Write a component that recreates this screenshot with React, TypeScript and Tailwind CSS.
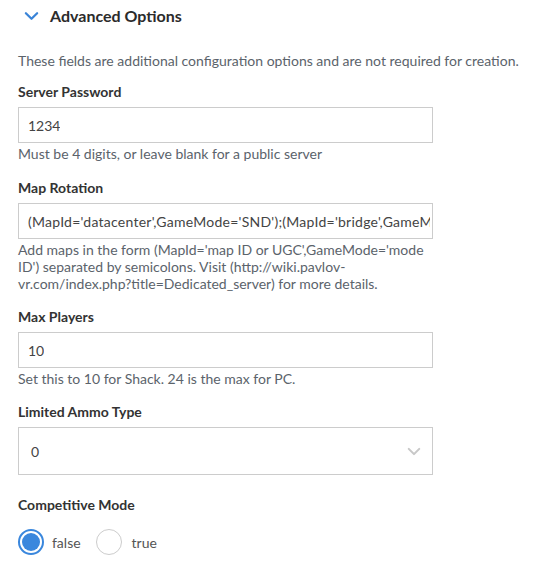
import React from "react";

function Chevron({ className, color }: { className?: string; color: string }) {
  return (
    <svg className={className} viewBox="0 0 16 10" fill="none">
      <path d="M2 2l6 6 6-6" stroke={color} strokeWidth="2.4" strokeLinecap="round" strokeLinejoin="round" />
    </svg>
  );
}

function Label({ children }: { children: React.ReactNode }) {
  return <div className="text-[14px] font-bold text-[#333333] leading-[17px]">{children}</div>;
}

function Help({ children }: { children: React.ReactNode }) {
  return <div className="text-[14px] text-[#5b636b] leading-[17px] mt-[2px]">{children}</div>;
}

function TextInput({ value, wide }: { value: string; wide?: boolean }) {
  return (
    <div className="mt-[7px] w-[415px] h-[36px] border border-[#cccccc] bg-white flex items-center pl-[9px] pr-[2px] overflow-hidden whitespace-nowrap text-[14px] text-[#444444]">
      <span className={wide ? "overflow-hidden block tracking-[0.25px]" : "overflow-hidden block"}>{value}</span>
    </div>
  );
}

export default function App() {
  return (
    <div className="w-[535px] h-[573px] bg-white pl-[18px]" style={{ fontFamily: "Lato, 'Open Sans', sans-serif" }}>
      <div className="flex items-center h-[32px] pl-[6px]">
        <Chevron className="w-[15px] h-[10px]" color="#3a84d8" />
        <span className="ml-[11px] text-[16px] font-bold text-[#2b2b2b]">Advanced Options</span>
      </div>
      <div className="mt-[20px] text-[14px] text-[#5b636b] leading-[17px] whitespace-nowrap">
        These fields are additional configuration options and are not required for creation.
      </div>

      <div className="mt-[14px]">
        <Label>Server Password</Label>
        <TextInput value="1234" />
        <Help>Must be 4 digits, or leave blank for a public server</Help>
      </div>

      <div className="mt-[17px]">
        <Label>Map Rotation</Label>
        <TextInput wide value="(MapId='datacenter',GameMode='SND');(MapId='bridge',GameMode='SND')" />
        <Help>
          <div className="w-[430px]">
            Add maps in the form (MapId='map ID or UGC',GameMode='mode ID') separated by semicolons. Visit (http://wiki.pavlov-vr.com/index.php?title=Dedicated_server) for more details.
          </div>
        </Help>
      </div>

      <div className="mt-[16px]">
        <Label>Max Players</Label>
        <TextInput value="10" />
        <Help>Set this to 10 for Shack. 24 is the max for PC.</Help>
      </div>

      <div className="mt-[16px]">
        <Label>Limited Ammo Type</Label>
        <div className="mt-[7px] w-[415px] h-[48px] border border-[#cccccc] bg-white flex items-center justify-between px-[12px] text-[14px] text-[#444444]">
          <span>0</span>
          <Chevron className="w-[14px] h-[9px] mr-[-1px]" color="#c8c8c8" />
        </div>
      </div>

      <div className="mt-[21px]">
        <Label>Competitive Mode</Label>
        <div className="mt-[16px] flex items-center gap-[15px]">
          <div className="flex items-center">
            <div className="w-[26px] h-[26px] rounded-full border-2 border-[#3a87dd] flex items-center justify-center">
              <div className="w-[18px] h-[18px] rounded-full bg-[#3a87dd]" />
            </div>
            <span className="ml-[8px] text-[14px] text-[#555555]">false</span>
          </div>
          <div className="flex items-center">
            <div className="w-[26px] h-[26px] rounded-full border border-[#cccccc]" />
            <span className="ml-[10px] text-[14px] text-[#555555]">true</span>
          </div>
        </div>
      </div>
    </div>
  );
}
